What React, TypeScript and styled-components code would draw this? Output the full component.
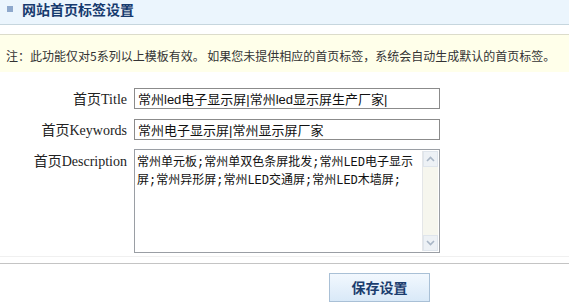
import React from "react";
import styled, { createGlobalStyle } from "styled-components";

const GlobalStyle = createGlobalStyle`
  html, body { margin: 0; padding: 0; background: #ffffff; }
  body { font-family: "Liberation Sans", "Noto Sans CJK SC", sans-serif; color: #222; }
  * { box-sizing: border-box; }
`;

const Page = styled.div`
  width: 569px;
  display: flex;
  flex-direction: column;
`;

const Header = styled.div`
  height: 25px;
  background: #ebf5fd;
  border-bottom: 1px solid #c6d6de;
  display: flex;
  align-items: flex-start;
  padding-left: 7px;
`;

const Bullet = styled.span`
  width: 6px;
  height: 6px;
  margin-top: 6px;
  background: #8ea8cc;
`;

const Title = styled.h2`
  margin: 0 0 0 9px;
  font-family: "Noto Sans CJK SC", sans-serif;
  font-size: 14px;
  font-weight: bold;
  line-height: 19px;
  color: #163a6e;
`;

const Note = styled.div`
  margin-top: 9px;
  height: 38px;
  border-top: 1px solid #dcdccb;
  background: #ffffea;
  display: flex;
  align-items: center;
  padding: 3px 0 0 6px;
  font-family: "Noto Sans CJK SC", sans-serif;
  font-size: 12px;
  color: #333;
  white-space: pre;
`;

const Form = styled.div`
  display: grid;
  grid-template-columns: 127px 306px;
  column-gap: 7px;
  padding-top: 16px;
  padding-bottom: 3px;
  border-bottom: 1px solid #f0f0f0;
`;

const Label = styled.label<{ $gap: number }>`
  margin-top: ${(p) => p.$gap}px;
  text-align: right;
  font-family: "Liberation Serif", "Noto Sans CJK SC", serif;
  font-size: 14px;
  line-height: 20px;
  padding-top: 2px;
  color: #222;
`;

const TextInput = styled.input<{ $gap: number }>`
  margin-top: ${(p) => p.$gap}px;
  height: 21px;
  width: 306px;
  border: 1px solid #8b8b8b;
  padding: 0 3px;
  font-family: "Liberation Sans", "Noto Sans CJK SC", sans-serif;
  font-size: 13px;
  color: #111;
  background: #fff;
  outline: none;
`;

const AreaBox = styled.div`
  margin-top: 8px;
  width: 306px;
  height: 104px;
  border: 1px solid #9a9ea4;
  display: flex;
  background: #fff;
`;

const Area = styled.textarea`
  flex: 1;
  border: none;
  outline: none;
  resize: none;
  overflow: hidden;
  padding: 4px 3px 0 2px;
  font-family: "Liberation Mono", "Noto Sans CJK SC", monospace;
  font-size: 12px;
  line-height: 18px;
  color: #111;
  background: transparent;
`;

const ScrollBar = styled.div`
  width: 16px;
  margin: 1px 1px 1px 0;
  background: #f6f6ee;
  border-left: 1px solid #e4e6e8;
  display: flex;
  flex-direction: column;
  justify-content: space-between;
`;

const ScrollButton = styled.div`
  height: 16px;
  background: #edf1f5;
  border: 1px solid #dfe5ec;
  display: flex;
  align-items: center;
  justify-content: center;
`;

const Divider = styled.div`
  margin-top: 6px;
  height: 1px;
  background: #c4c4c4;
`;

const ButtonRow = styled.div`
  padding: 9px 0 0 329px;
  display: flex;
`;

const SaveButton = styled.button`
  width: 101px;
  height: 29px;
  border: 1px solid #a9c0d6;
  background: linear-gradient(#f2f8fe, #d9e9f8);
  font-family: "Noto Sans CJK SC", sans-serif;
  font-size: 14px;
  font-weight: bold;
  color: #1b3d6e;
  padding: 0;
  line-height: 27px;
`;

const Arrow = ({ up }: { up?: boolean }) => (
  <svg width="9" height="6" viewBox="0 0 9 6">
    <path
      d={up ? "M1 5 L4.5 1.5 L8 5" : "M1 1 L4.5 4.5 L8 1"}
      fill="none"
      stroke="#a9b6c6"
      strokeWidth="1.6"
    />
  </svg>
);

export default function App() {
  return (
    <Page>
      <GlobalStyle />
      <Header>
        <Bullet />
        <Title>网站首页标签设置</Title>
      </Header>
      <Note>注：此功能仅对5系列以上模板有效。 如果您未提供相应的首页标签，系统会自动生成默认的首页标签。</Note>
      <Form>
        <Label $gap={0}>首页Title</Label>
        <TextInput $gap={0} defaultValue="常州led电子显示屏|常州led显示屏生产厂家|" />
        <Label $gap={9}>首页Keywords</Label>
        <TextInput $gap={9} defaultValue="常州电子显示屏|常州显示屏厂家" />
        <Label $gap={9}>首页Description</Label>
        <AreaBox>
          <Area defaultValue="常州单元板;常州单双色条屏批发;常州LED电子显示屏;常州异形屏;常州LED交通屏;常州LED木墙屏;" />
          <ScrollBar>
            <ScrollButton>
              <Arrow up />
            </ScrollButton>
            <ScrollButton>
              <Arrow />
            </ScrollButton>
          </ScrollBar>
        </AreaBox>
      </Form>
      <Divider />
      <ButtonRow>
        <SaveButton>保存设置</SaveButton>
      </ButtonRow>
    </Page>
  );
}
